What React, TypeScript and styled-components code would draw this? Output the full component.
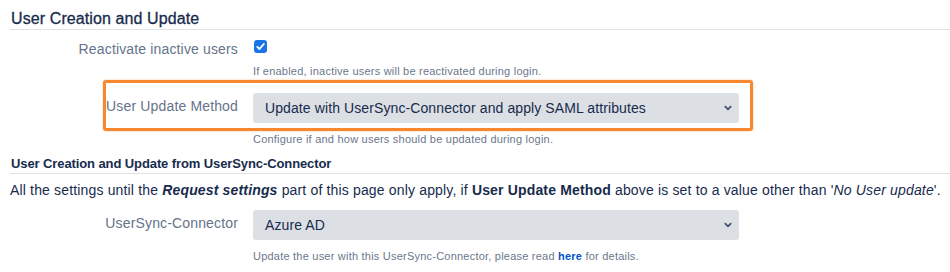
import React from "react";
import styled, { createGlobalStyle } from "styled-components";

const GlobalStyle = createGlobalStyle`
  body {
    margin: 0;
    background: #ffffff;
    font-family: "Liberation Sans", Arial, sans-serif;
    color: #172b4d;
  }
`;

const Page = styled.div`
  padding: 0 0 0 10px;
  width: 940px;
`;

const SectionTitle = styled.h2<{ $small?: boolean }>`
  margin: ${(p) => (p.$small ? "9px 0 0" : "0")};
  padding: ${(p) => (p.$small ? "0 0 0 1px" : "9px 0 1px 1px")};
  font-size: ${(p) => (p.$small ? "13px" : "16px")};
  line-height: ${(p) => (p.$small ? "18px" : "19px")};
  font-weight: ${(p) => (p.$small ? 700 : 400)};
  letter-spacing: ${(p) => (p.$small ? "-0.1px" : "0.1px")};
  -webkit-text-stroke: ${(p) => (p.$small ? "0" : "0.3px")};
  color: #172b4d;
  border-bottom: 1px solid #dfe1e6;
`;

const Field = styled.div<{ $top: number; $highlight?: boolean }>`
  position: relative;
  display: grid;
  grid-template-columns: 228px 486px;
  column-gap: 15px;
  align-items: start;
  margin-top: ${(p) => p.$top}px;

  &::after {
    content: "";
    display: ${(p) => (p.$highlight ? "block" : "none")};
    position: absolute;
    left: 93px;
    top: -13px;
    width: 650px;
    height: 51px;
    box-sizing: border-box;
    border: 3px solid #f7882f;
    border-radius: 3px;
    box-shadow: 0 0 2px rgba(247, 136, 47, 0.6);
    pointer-events: none;
  }
`;

const Label = styled.label<{ $pad?: number }>`
  text-align: right;
  font-size: 14px;
  line-height: 20px;
  letter-spacing: 0.15px;
  color: #66738a;
  padding-top: ${(p) => p.$pad ?? 0}px;
`;

const Checkbox = styled.span`
  display: inline-flex;
  align-items: center;
  justify-content: center;
  width: 13px;
  height: 13px;
  margin-left: 1px;
  border-radius: 3px;
  background: #1a73e8;
`;

const Help = styled.div<{ $top: number }>`
  margin: ${(p) => p.$top}px 0 0 243px;
  font-size: 11px;
  line-height: 14px;
  letter-spacing: 0.22px;
  color: #6b778c;
`;

const HelpLink = styled.a`
  color: #0052cc;
  font-weight: 700;
  text-decoration: none;
`;

const Select = styled.div`
  display: flex;
  align-items: center;
  justify-content: space-between;
  height: 30px;
  padding: 0 7px 0 12px;
  border-radius: 3px;
  background: #dcdfe4;
  color: #172b4d;
  font-size: 14px;
  letter-spacing: 0.1px;
`;

const Intro = styled.p`
  margin: 6px 0 0;
  font-size: 14px;
  line-height: 20px;
  letter-spacing: 0.16px;
  color: #172b4d;
`;

const Chevron = () => (
  <svg width="8" height="6" viewBox="0 0 8 6">
    <path d="M1.3 1.6 L4 4.3 L6.7 1.6" fill="none" stroke="#42526e" strokeWidth="1.8" strokeLinecap="round" strokeLinejoin="round" />
  </svg>
);

const Tick = () => (
  <svg width="11" height="11" viewBox="0 0 11 11">
    <path d="M2.3 5.8 L4.5 8 L8.8 3" fill="none" stroke="#ffffff" strokeWidth="1.9" strokeLinecap="round" strokeLinejoin="round" />
  </svg>
);

export default function App() {
  return (
    <Page>
      <GlobalStyle />
      <SectionTitle>User Creation and Update</SectionTitle>

      <Field $top={8}>
        <Label $pad={1}>Reactivate inactive users</Label>
        <div>
          <Checkbox>
            <Tick />
          </Checkbox>
        </div>
      </Field>
      <Help $top={5}>If enabled, inactive users will be reactivated during login.</Help>

      <Field $top={15} $highlight>
        <Label $pad={3}>User Update Method</Label>
        <Select>
          <span>Update with UserSync-Connector and apply SAML attributes</span>
          <Chevron />
        </Select>
      </Field>
      <Help $top={9}>Configure if and how users should be updated during login.</Help>

      <SectionTitle $small>User Creation and Update from UserSync-Connector</SectionTitle>
      <Intro>
        All the settings until the{" "}
        <b>
          <i>Request settings</i>
        </b>{" "}
        part of this page only apply, if <b>User Update Method</b> above is set to a value other than '
        <i>No User update</i>'.
      </Intro>

      <Field $top={10}>
        <Label $pad={3}>UserSync-Connector</Label>
        <Select>
          <span>Azure AD</span>
          <Chevron />
        </Select>
      </Field>
      <Help $top={9}>
        Update the user with this UserSync-Connector, please read <HelpLink href="#">here</HelpLink> for details.
      </Help>
    </Page>
  );
}
